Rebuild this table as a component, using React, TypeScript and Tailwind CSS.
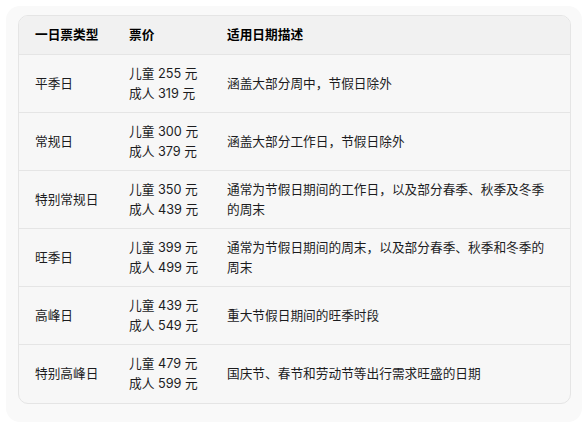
import React from 'react';

const rows = [
  { type: '平季日', child: '255', adult: '319', desc: '涵盖大部分周中，节假日除外' },
  { type: '常规日', child: '300', adult: '379', desc: '涵盖大部分工作日，节假日除外' },
  { type: '特别常规日', child: '350', adult: '439', desc: '通常为节假日期间的工作日，以及部分春季、秋季及冬季的周末' },
  { type: '旺季日', child: '399', adult: '499', desc: '通常为节假日期间的周末，以及部分春季、秋季和冬季的周末' },
  { type: '高峰日', child: '439', adult: '549', desc: '重大节假日期间的旺季时段' },
  { type: '特别高峰日', child: '479', adult: '599', desc: '国庆节、春节和劳动节等出行需求旺盛的日期' },
];

export default function App() {
  return (
    <div
      className="min-h-screen bg-white pt-[6px] pl-[6px] text-[12.7px] leading-[20px] text-[#1c1c1e]"
      style={{ fontFamily: 'Inter, "Noto Sans CJK SC", sans-serif' }}
    >
      <div className="w-[576px] h-[416px] rounded-[14px] bg-[#f9f9f9] pl-[12px] pt-[9px]">
        <div className="w-[553px] rounded-[10px] border border-[#e5e5e5] bg-[#f7f7f7] overflow-hidden">
          <div className="grid grid-cols-[94px_98px_1fr] h-[39px] items-center bg-[#f1f1f1] border-b border-[#e5e5e5] font-semibold text-black">
            <div className="pl-[16px]">一日票类型</div>
            <div className="pl-[16px]">票价</div>
            <div className="pl-[16px]">适用日期描述</div>
          </div>
          {rows.map((r, i) => (
            <div
              key={r.type}
              className={
                'grid grid-cols-[94px_98px_1fr] h-[58px] items-center ' +
                (i < rows.length - 1 ? 'border-b border-[#e5e5e5]' : '')
              }
            >
              <div className="pl-[16px]">{r.type}</div>
              <div className="pl-[16px]">
                <div>儿童 {r.child} 元</div>
                <div>成人 {r.adult} 元</div>
              </div>
              <div className="pl-[16px] pr-[20px]">{r.desc}</div>
            </div>
          ))}
        </div>
      </div>
    </div>
  );
}
